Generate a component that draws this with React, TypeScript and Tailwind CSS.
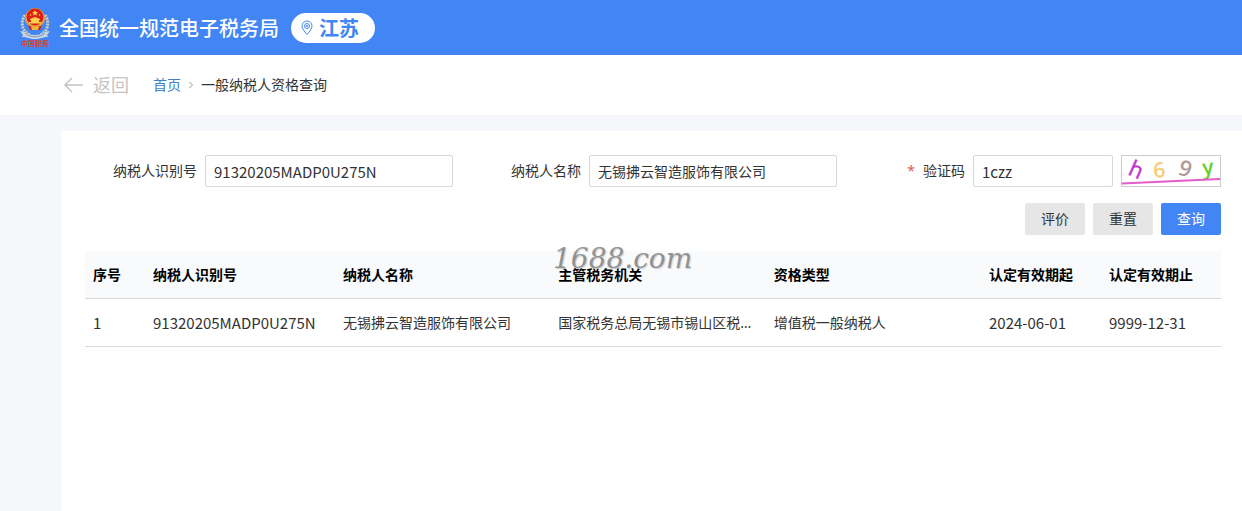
import React, { useState } from 'react';

interface TaxpayerRecord {
  id: number;
  taxNo: string;
  name: string;
  authority: string;
  type: string;
  from: string;
  to: string;
}

const records: TaxpayerRecord[] = [
  {
    id: 1,
    taxNo: '91320205MADP0U275N',
    name: '无锡拂云智造服饰有限公司',
    authority: '国家税务总局无锡市锡山区税务局',
    type: '增值税一般纳税人',
    from: '2024-06-01',
    to: '9999-12-31',
  },
];

const Emblem = () => (
  <svg className="w-8 h-11 overflow-visible" viewBox="0 0 32 44" aria-hidden="true">
    {/* wheat and ribbon */}
    <path d="M6 9C1 16 3 26 11 29M26 9c5 7 3 17-5 20" fill="none" stroke="#d8cdb4" strokeWidth="3" strokeDasharray="2 1" />
    <path d="M1 25l5 1c4 4 16 4 20 0l5-1-3 4 1 2c-6 0-7 2-13 2s-7-2-13-2l1-2z" fill="#c9d3e4" />
    <path d="M6 27c5 5 15 5 20 0" fill="none" stroke="#8296ba" strokeWidth="1" />
    {/* national emblem */}
    <circle cx="16" cy="12" r="10" fill="#e8a33c" />
    <circle cx="16" cy="11" r="8.5" fill="#dc1f18" />
    <path d="M16 4l.9 1.9 2.1.2-1.6 1.4.5 2-1.9-1-1.9 1 .5-2L13 6.100l2.100-.2z" fill="#ffd84a" />
    <circle cx="11.500" cy="9" r=".8" fill="#ffd84a" />
    <circle cx="20.500" cy="9" r=".8" fill="#ffd84a" />
    <path d="M11 13l5-2 5 2v1h-1v2h2v1.500H10V16h2v-2h-1z" fill="#ffd04a" />
    <path d="M9 19c4 3 10 3 14 0l-2 5H11z" fill="#c8241c" />
    <path d="M12 21h8l-1 3h-6z" fill="#f0b541" />
    <text x="16" y="40" textAnchor="middle" fontSize="7" fontWeight="700" fill="#d8432f">中国税务</text>
  </svg>
);

const PinIcon = () => (
  <svg className="w-3 h-4" viewBox="0 0 12 16" fill="none" stroke="#4285f4" aria-hidden="true">
    <path d="M6 14.500C3 11 1 8.500 1 6a5 5 0 0110 0c0 2.500-2 5-5 8.500z" />
    <circle cx="6" cy="6" r="2.500" />
    <circle cx="6" cy="6" r=".7" />
  </svg>
);

const Captcha = () => (
  <svg className="w-full h-full overflow-visible" viewBox="0 0 98 30" fontFamily="Open Sans, sans-serif" fontSize="22" role="img">
    <text transform="translate(5 18) rotate(24)" fill="#bf35cf" stroke="#bf35cf" strokeWidth=".5">h</text>
    <text transform="translate(32 22) rotate(-6)" fontSize="21" fontWeight="600" fill="#f8cc74">6</text>
    <text transform="translate(55 18) rotate(18)" fontWeight="600" fill="#b09a9a">9</text>
    <text transform="translate(81 19) rotate(-6)" fontSize="21" fontWeight="600" fill="#66cf2c">y</text>
    <path d="M0 27.500L98 23" stroke="#e65cc8" strokeWidth="2" />
  </svg>
);

const inputClass = 'h-8 min-w-0 flex-1 rounded-xs border border-[#d5d8de] bg-white px-2 text-[#333] outline-none focus:border-[#4285f4]';
const labelClass = 'w-[120px] shrink-0 pr-2 text-right';
const buttonClass = 'h-8 w-[60px] rounded-xs cursor-pointer';
const cellClass = 'h-12 truncate border-b border-[#d5d8de] px-2';
const latinClass = "text-[15px] leading-5 font-['Noto_Sans_CJK_SC',sans-serif]";

const App: React.FC = () => {
  const [taxNo, setTaxNo] = useState('91320205MADP0U275N');
  const [name, setName] = useState('无锡拂云智造服饰有限公司');
  const [code, setCode] = useState('1czz');

  const handleReset = () => {
    setTaxNo('');
    setName('');
    setCode('');
  };

  return (
    <div className="min-h-screen flex flex-col bg-[#f5f7fa] text-sm text-[#333] font-['Noto_Sans','Noto_Sans_CJK_SC',sans-serif]">
      <header className="flex h-[55px] items-center bg-[#4285f4] pl-[19px] font-['Noto_Sans_CJK_SC',sans-serif]">
        <Emblem />
        <h1 className="ml-2 text-xl font-medium text-white">全国统一规范电子税务局</h1>
        <button type="button" className="ml-3 flex h-[30px] items-center gap-1.5 rounded-full bg-white pr-4 pl-2.5 text-xl font-bold text-[#4285f4]">
          <PinIcon />
          江苏
        </button>
      </header>

      <nav className="flex h-[60px] items-center bg-white pl-16">
        <a href="#back" className="flex items-center gap-2.5 text-lg text-[#c4c4c4]">
          <svg className="w-[19px] h-4" viewBox="0 0 19 16" fill="none" stroke="currentColor" strokeWidth="1.500" aria-hidden="true">
            <path d="M8 1L1 8l7 7M1 8h18" />
          </svg>
          返回
        </a>
        <a href="#home" className="ml-6 text-[#4080c4]">首页</a>
        <svg className="mx-[7px] w-1.5 h-2" viewBox="0 0 6 8" fill="none" stroke="#999" aria-hidden="true">
          <path d="M1.500 1l3 3-3 3" />
        </svg>
        <span>一般纳税人资格查询</span>
      </nav>

      <main className="mt-4 ml-[61px] flex-1 bg-white pt-6 pr-[21px] pl-6">
        <form onSubmit={(e) => e.preventDefault()}>
          <div className="grid grid-cols-3 gap-4">
            <div className="flex items-center">
              <label htmlFor="taxNo" className={labelClass}>纳税人识别号</label>
              <input id="taxNo" value={taxNo} onChange={(e) => setTaxNo(e.target.value)} className={`${inputClass} ${latinClass}`} />
            </div>
            <div className="flex items-center">
              <label htmlFor="name" className={labelClass}>纳税人名称</label>
              <input id="name" value={name} onChange={(e) => setName(e.target.value)} className={inputClass} />
            </div>
            <div className="flex items-center">
              <label htmlFor="code" className={labelClass}>
                <span className="mr-2 text-[#e05a5a]">*</span>验证码
              </label>
              <input id="code" value={code} onChange={(e) => setCode(e.target.value)} className={`${inputClass} ${latinClass}`} />
              <button type="button" aria-label="刷新验证码" className="ml-2 h-8 w-[100px] border border-[#ccc] cursor-pointer">
                <Captcha />
              </button>
            </div>
          </div>
          <div className="mt-4 flex justify-end gap-2">
            <button type="button" className={`${buttonClass} bg-[#e6e6e6]`}>评价</button>
            <button type="button" onClick={handleReset} className={`${buttonClass} bg-[#e6e6e6]`}>重置</button>
            <button type="submit" className={`${buttonClass} bg-[#4285f4] text-white`}>查询</button>
          </div>
        </form>

        <div className="relative mt-4">
          <table className="w-full table-fixed border-separate border-spacing-0 text-left">
            <thead>
              <tr className="bg-[#f8fafc] text-black">
                <th className={`${cellClass} w-[60px]`}>序号</th>
                <th className={`${cellClass} w-[190px]`}>纳税人识别号</th>
                <th className={cellClass}>纳税人名称</th>
                <th className={cellClass}>主管税务机关</th>
                <th className={cellClass}>资格类型</th>
                <th className={`${cellClass} w-[120px]`}>认定有效期起</th>
                <th className={`${cellClass} w-[120px]`}>认定有效期止</th>
              </tr>
            </thead>
            <tbody>
              {records.map((r) => (
                <tr key={r.id}>
                  <td className={`${cellClass} ${latinClass}`}>{r.id}</td>
                  <td className={`${cellClass} ${latinClass}`}>{r.taxNo}</td>
                  <td className={cellClass}>{r.name}</td>
                  <td className={cellClass}>{r.authority}</td>
                  <td className={cellClass}>{r.type}</td>
                  <td className={`${cellClass} ${latinClass}`}>{r.from}</td>
                  <td className={`${cellClass} ${latinClass}`}>{r.to}</td>
                </tr>
              ))}
            </tbody>
          </table>
          <span className="pointer-events-none absolute -top-2 left-[468px] font-['DejaVu_Serif',serif] text-[28px] leading-8 italic text-[#858585]/85 [text-shadow:1px_1px_1px_#ccc]">
            1688.com
          </span>
        </div>
      </main>
    </div>
  );
};

export default App;
